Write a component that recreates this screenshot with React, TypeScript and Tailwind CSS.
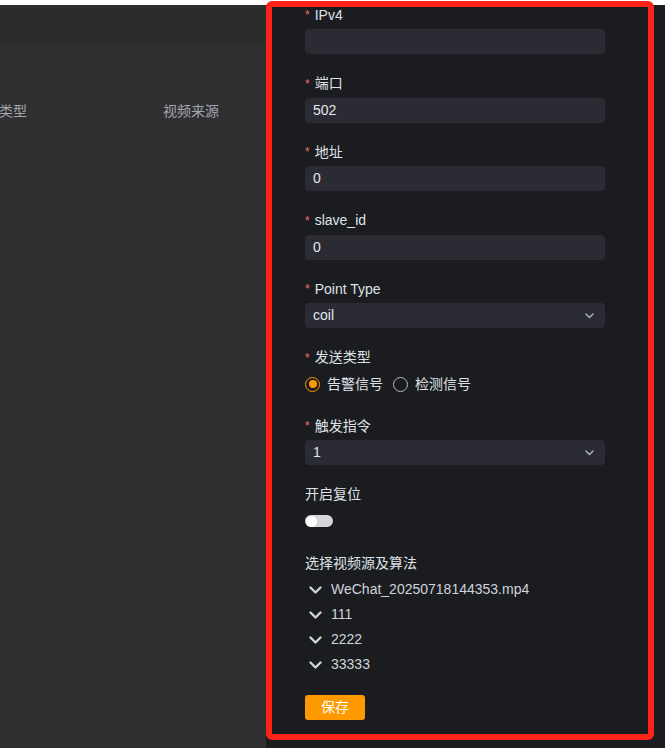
import { ReactNode } from 'react'

const font = { fontFamily: '"Liberation Sans", "Noto Sans CJK SC", Arial, sans-serif' }

function Label({ text, required = true }: { text: string; required?: boolean }) {
  return (
    <div className="h-5 mb-1 flex items-center text-[14px] text-[#dfe2e8]">
      {required && <span className="text-[#f56c6c] mr-[5px] text-[12px]">*</span>}
      <span>{text}</span>
    </div>
  )
}

function FormItem({ label, required = true, children }: { label: string; required?: boolean; children: ReactNode }) {
  return (
    <div className="mb-[19.5px]">
      <Label text={label} required={required} />
      {children}
    </div>
  )
}

function Input({ value = '' }: { value?: string }) {
  return (
    <div className="h-[25px] w-[300px] rounded-[4px] bg-[#2a2b33] px-2 flex items-center text-[14px] text-[#e5e7ec]">
      {value}
    </div>
  )
}

function Select({ value }: { value: string }) {
  return (
    <div className="h-[25px] w-[300px] rounded-[4px] bg-[#2a2b33] pl-2 pr-[11px] flex items-center justify-between text-[14px] text-[#e5e7ec]">
      <span>{value}</span>
      <svg width="9" height="6" viewBox="0 0 9 6" fill="none">
        <path d="M1 1l3.5 3.5L8 1" stroke="#a8abb2" strokeWidth="1.6" strokeLinecap="round" strokeLinejoin="round" />
      </svg>
    </div>
  )
}

function TreeNode({ text }: { text: string }) {
  return (
    <div className="h-[25px] flex items-center text-[14px] text-[#cfd3dc]">
      <svg width="13" height="8" viewBox="0 0 13 8" fill="none" className="ml-[4px] mr-[9px]">
        <path d="M1.5 1.5l5 5 5-5" stroke="#cfd3dc" strokeWidth="2.4" strokeLinecap="round" strokeLinejoin="round" />
      </svg>
      <span>{text}</span>
    </div>
  )
}

export default function App() {
  return (
    <div className="relative w-[665px] h-[748px] overflow-hidden bg-white" style={font}>
      <div className="h-[5px] bg-white" />
      <div className="flex h-[743px]">
        {/* table behind the drawer */}
        <div className="w-[266px] flex flex-col bg-[#303032]">
          <div className="h-10 bg-[#2b2c2c]" />
          <div className="pt-[55px] h-[22px] box-content flex items-center text-[14px] text-[#a3a6ad]">
            <span className="-ml-px">类型</span>
            <span className="ml-[136px]">视频来源</span>
          </div>
        </div>

        {/* drawer */}
        <div className="flex-1 bg-[#1b1c1f] pl-[39px]">
          <FormItem label="IPv4">
            <Input />
          </FormItem>
          <FormItem label="端口">
            <Input value="502" />
          </FormItem>
          <FormItem label="地址">
            <Input value="0" />
          </FormItem>
          <FormItem label="slave_id">
            <Input value="0" />
          </FormItem>
          <FormItem label="Point Type">
            <Select value="coil" />
          </FormItem>
          <FormItem label="发送类型">
            <div className="h-[25px] flex items-center text-[14px] text-[#dfe2e8]">
              <span className="w-[15px] h-[15px] rounded-full border-[1.5px] border-[#ff9900] flex items-center justify-center">
                <span className="w-[8px] h-[8px] rounded-full bg-[#ff9900]" />
              </span>
              <span className="ml-[7px]">告警信号</span>
              <span className="ml-[10px] w-[15px] h-[15px] rounded-full border border-[#b5b8bf]" />
              <span className="ml-[7px]">检测信号</span>
            </div>
          </FormItem>
          <FormItem label="触发指令">
            <Select value="1" />
          </FormItem>
          <FormItem label="开启复位" required={false}>
            <div className="h-[25px] flex items-center">
              <div className="w-[28px] h-[12px] rounded-full bg-[#d4d6da] flex items-center pl-px">
                <span className="w-[11px] h-[11px] rounded-full bg-white" />
              </div>
            </div>
          </FormItem>
          <div>
            <Label text="选择视频源及算法" required={false} />
            <TreeNode text="WeChat_20250718144353.mp4" />
            <TreeNode text="111" />
            <TreeNode text="2222" />
            <TreeNode text="33333" />
          </div>
          <button className="mt-[17.5px] h-[25px] w-[60px] rounded-[3px] bg-[#ff9900] text-white text-[14px] flex items-center justify-center">
            保存
          </button>
        </div>
      </div>

      {/* red annotation frame */}
      <div className="pointer-events-none absolute left-[266px] top-px w-[388px] h-[739px] rounded-[6px] border-[6px] border-[#fe2219]" />
    </div>
  )
}
